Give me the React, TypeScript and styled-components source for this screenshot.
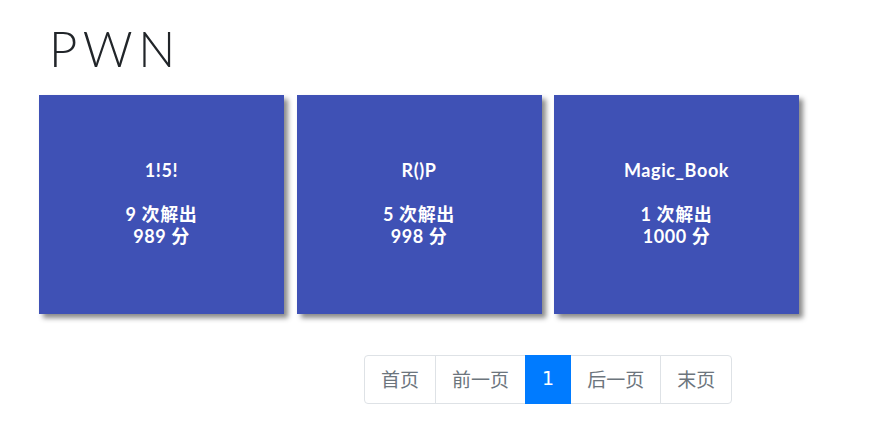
import React from "react";
import styled, { createGlobalStyle } from "styled-components";

const Global = createGlobalStyle`
  html, body { margin: 0; padding: 0; background: #fff; }
  body { font-family: Lato, "Noto Sans CJK SC", sans-serif; color: #212529; }
`;

const Page = styled.div`
  padding: 14px 0 0 39px;
`;

const Title = styled.h1`
  margin: 0 0 0 10px;
  font-family: Lato, sans-serif;
  font-weight: 300;
  font-size: 49px;
  line-height: 68px;
  letter-spacing: 5.5px;
  color: #212529;
`;

const Grid = styled.div`
  display: flex;
  gap: 12.5px;
  margin-top: 13px;
`;

const Card = styled.div`
  width: 245px;
  height: 219px;
  box-sizing: border-box;
  padding-bottom: 3px;
  background: #3f51b5;
  box-shadow: 4px 4px 5px #8a8a8a;
  color: #fff;
  display: flex;
  flex-direction: column;
  align-items: center;
  justify-content: center;
  font-family: Lato, "Noto Sans CJK SC", sans-serif;
  font-weight: 700;
  font-size: 18px;
  line-height: 22px;
  letter-spacing: 0.6px;
  text-align: center;
`;

const CardName = styled.div`
  margin-bottom: 22px;
`;

const Pager = styled.nav`
  display: flex;
  margin: 41px 0 0 325px;
`;

const PageItem = styled.span<{ $active?: boolean; $first?: boolean; $last?: boolean }>`
  display: block;
  padding: 8px 16px;
  line-height: 29px;
  font-size: 19px;
  font-family: "DejaVu Sans", "Noto Sans CJK SC", sans-serif;
  color: ${(p) => (p.$active ? "#fff" : "#6c757d")};
  background: ${(p) => (p.$active ? "#007bff" : "#fff")};
  border: 1px solid ${(p) => (p.$active ? "#007bff" : "#dee2e6")};
  margin-left: ${(p) => (p.$first ? "0" : "-1px")};
  position: relative;
  z-index: ${(p) => (p.$active ? 1 : 0)};
  border-radius: ${(p) => (p.$first ? "4px 0 0 4px" : p.$last ? "0 4px 4px 0" : "0")};
`;

const PagerText = styled.span`
  font-family: "Noto Sans CJK SC", sans-serif;
`;

const challenges = [
  { name: "1!5!", solves: 9, score: 989 },
  { name: "R()P", solves: 5, score: 998 },
  { name: "Magic_Book", solves: 1, score: 1000 },
];

export default function App() {
  return (
    <>
      <Global />
      <Page>
        <Title>PWN</Title>
        <Grid>
          {challenges.map((c) => (
            <Card key={c.name}>
              <CardName>{c.name}</CardName>
              <div>{c.solves} 次解出</div>
              <div>{c.score} 分</div>
            </Card>
          ))}
        </Grid>
        <Pager>
          <PageItem $first><PagerText>首页</PagerText></PageItem>
          <PageItem><PagerText>前一页</PagerText></PageItem>
          <PageItem $active>1</PageItem>
          <PageItem><PagerText>后一页</PagerText></PageItem>
          <PageItem $last><PagerText>末页</PagerText></PageItem>
        </Pager>
      </Page>
    </>
  );
}
